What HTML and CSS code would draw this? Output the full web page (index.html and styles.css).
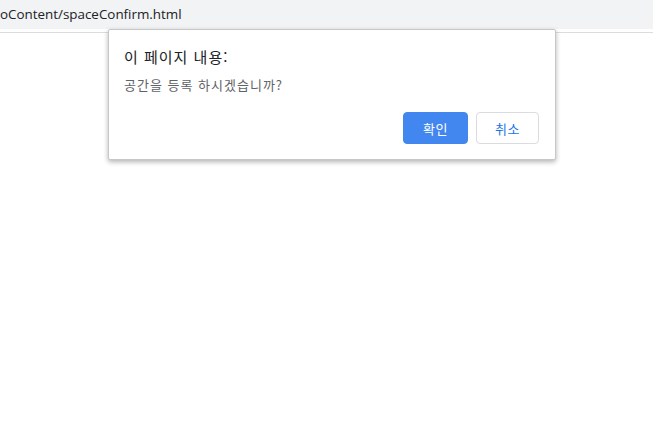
FILE: index.html
```html
<!DOCTYPE html>
<html lang="ko">
<head>
<meta charset="utf-8">
<link rel="stylesheet" href="styles.css">
</head>
<body>
<div class="topbar">
  <div class="url">oContent/spaceConfirm.html</div>
</div>
<div class="divider"></div>
<main class="page"></main>
<div class="dialog" role="dialog">
  <div class="title">이 페이지 내용:</div>
  <div class="message">공간을 등록 하시겠습니까?</div>
  <div class="actions">
    <button class="btn primary">확인</button>
    <button class="btn secondary">취소</button>
  </div>
</div>
</body>
</html>
```
FILE: styles.css
```css
html, body {
  margin: 0;
  padding: 0;
  background: #ffffff;
  width: 653px;
  height: 447px;
  overflow: hidden;
  font-family: "Noto Sans CJK KR", "Noto Sans", sans-serif;
}
.topbar {
  height: 29px;
  background: #f1f3f4;
  display: flex;
  align-items: center;
  overflow: hidden;
}
.url {
  font-family: "Open Sans", "Liberation Sans", sans-serif;
  font-size: 13.4px;
  color: #202124;
  margin-left: 0;
  white-space: nowrap;
  padding-bottom: 1px;
}
.divider {
  margin-top: 3px;
  height: 1px;
  background: #dadce0;
}
.page {
  display: block;
}
.dialog {
  position: absolute;
  left: 108px;
  top: 29px;
  width: 446px;
  height: 129px;
  background: #ffffff;
  border: 1px solid #c8c8c8;
  border-radius: 2px;
  box-shadow: 0 2px 5px rgba(0, 0, 0, 0.3);
  display: flex;
  flex-direction: column;
}
.title {
  margin: 17px 16px 0 15px;
  font-size: 15px;
  line-height: 20px;
  letter-spacing: 1px;
  color: #202124;
}
.message {
  margin: 9px 16px 0 15px;
  font-size: 13px;
  line-height: 18px;
  letter-spacing: 1px;
  color: #5f6368;
}
.actions {
  margin-top: auto;
  padding: 0 16px 15px 0;
  display: flex;
  justify-content: flex-end;
  gap: 8px;
}
.btn {
  height: 32px;
  border-radius: 4px;
  font-family: "Noto Sans CJK KR", "Noto Sans", sans-serif;
  font-size: 13px;
  letter-spacing: 0.5px;
  padding: 0;
  cursor: pointer;
}
.primary {
  width: 65px;
  background: #4187ef;
  border: 1px solid #4187ef;
  color: #ffffff;
}
.secondary {
  width: 63px;
  background: #ffffff;
  border: 1px solid #dadce0;
  color: #1a73e8;
}
```
